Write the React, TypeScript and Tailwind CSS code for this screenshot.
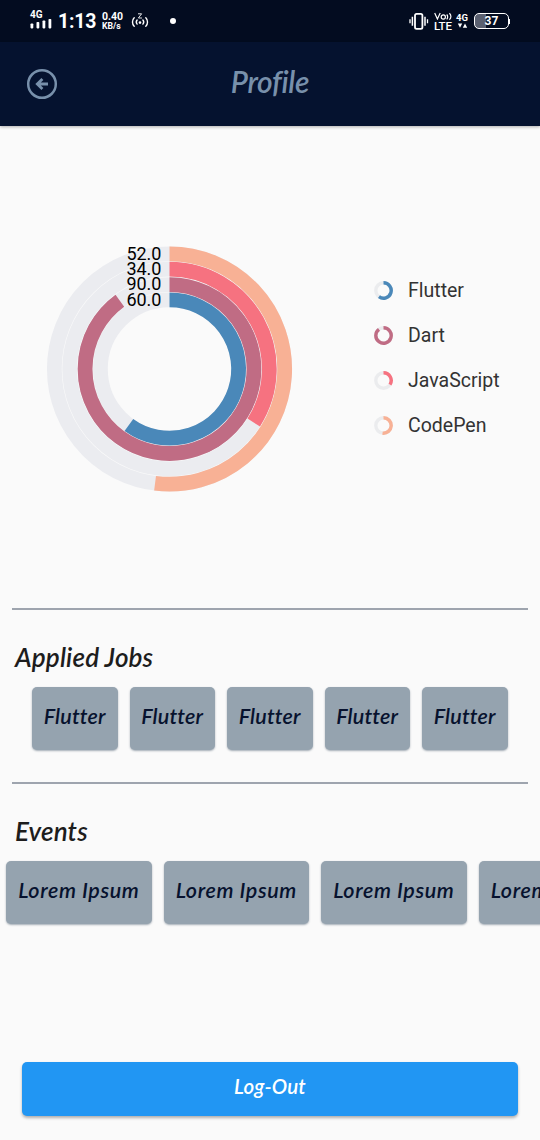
import React from "react";

const LEGEND = [
  { name: "Flutter", value: 60, color: "#4a88b9" },
  { name: "Dart", value: 90, color: "#c06c84" },
  { name: "JavaScript", value: 34, color: "#f67280" },
  { name: "CodePen", value: 52, color: "#f8b195" },
];

function arc(cx: number, cy: number, r: number, percent: number) {
  const a = (percent / 100) * Math.PI * 2;
  const x = cx + r * Math.sin(a);
  const y = cy - r * Math.cos(a);
  return `M${cx} ${cy - r}A${r} ${r} 0 ${percent > 50 ? 1 : 0} 1 ${x} ${y}`;
}

function RadialChart() {
  return (
    <svg width="248" height="248" viewBox="0 0 248 248" fill="none" className="shrink-0">
      {LEGEND.map((s, i) => {
        const r = 69.1 + i * 15.35;
        return (
          <g key={s.name} strokeWidth="14.8">
            <circle cx="124.5" cy="124" r={r} stroke="#ebecf0" />
            <path d={arc(124.5, 124, r, s.value)} stroke={s.color} />
          </g>
        );
      })}
      <g fill="#000" fontFamily="Roboto, sans-serif" fontSize="18" textAnchor="end">
        <text x="116.5" y="14.6">52.0</text>
        <text x="116.5" y="30">34.0</text>
        <text x="116.5" y="45.4">90.0</text>
        <text x="116.5" y="60.8">60.0</text>
      </g>
    </svg>
  );
}

function StatusBar() {
  return (
    <div className="flex h-[42px] items-start justify-between bg-[#030c20] pr-[30px] pl-[30px] font-['Roboto',sans-serif] text-white">
      <div className="flex items-start">
        <div className="flex w-[28px] flex-col pt-[11px]">
          <span className="text-[10px] leading-[8px] font-bold">4G</span>
          <svg width="22" height="10" viewBox="0 0 22 10" fill="#fff">
            <rect x="0.5" y="4.4" width="2.8" height="5" rx="0.8" />
            <rect x="6.5" y="3" width="2.8" height="6.4" rx="0.8" />
            <rect x="12.5" y="1.4" width="2.8" height="8" rx="0.8" />
            <rect x="18.5" y="0" width="2.8" height="9.4" rx="0.8" />
          </svg>
        </div>
        <span className="w-[44px] pt-[10px] text-[19.5px] leading-[24px] font-bold tracking-[-0.2px] whitespace-nowrap">1:13</span>
        <div className="flex w-[29px] flex-col pt-[12px] font-bold whitespace-nowrap">
          <span className="text-[10.5px] leading-[9px]">0.40</span>
          <span className="text-[8.7px] leading-[10px]">KB/s</span>
        </div>
        <svg width="18" height="18" viewBox="0 0 18 18" fill="none" stroke="#fff" strokeWidth="1.4" strokeLinecap="round" className="mt-[12px]">
          <path d="M3.2 5.8C.9 8 .9 12 3.2 14.2M14.8 5.8c2.3 2.2 2.3 6.2 0 8.4M6.1 8c-1 1.2-1 2.9 0 4.1M11.9 8c1 1.2 1 2.9 0 4.1" />
          <path d="M7.4 1.8h3.2L7.4 6h3.2" strokeWidth=".9" />
          <circle cx="9" cy="10.6" r="1.3" fill="#fff" stroke="none" />
        </svg>
        <span className="mt-[18px] ml-[21px] size-[6px] rounded-full bg-white" />
      </div>
      <div className="flex items-start">
        <svg width="20" height="18" viewBox="0 0 20 18" fill="none" stroke="#fff" className="mt-[12px]">
          <rect x="6" y="1.8" width="7.4" height="15" rx="1.6" strokeWidth="1.8" />
          <path d="M3.4 4.7v9M16 4.7v9" strokeWidth="1.5" />
          <path d="M1 7.2v4M18.5 7.2v4" strokeWidth="1.3" />
        </svg>
        <div className="ml-[5px] flex w-[20px] flex-col pt-[12px]">
          <svg width="20" height="8" viewBox="0 0 20 8" fill="none" stroke="#fff" strokeWidth="1.2">
            <path d="M.7 1 3.4 7 6.2 1" />
            <circle cx="9.3" cy="5" r="2.1" />
            <path d="M12.7 2.5c1.3 1.3 1.3 3.6 0 4.9M15.4 1.2c2 1.9 2 4.5 0 6.4" />
          </svg>
          <span className="mt-px text-[11.5px] leading-[10px] font-medium tracking-[-0.2px]">LTE</span>
        </div>
        <div className="ml-[2px] flex w-[18px] flex-col pt-[14px]">
          <span className="text-[9.5px] leading-[8px] font-bold">4G</span>
          <svg width="13" height="6" viewBox="0 0 13 6" fill="#fff" className="mt-px">
            <path d="M1.8.6h4.4L4 4.8ZM6.8 4.8h4.4L9 .6Z" />
          </svg>
        </div>
        <div className="mt-[13px] flex items-center">
          <div className="flex h-[16px] w-[35px] items-center justify-center rounded-[5px] border-[1.5px] border-white bg-[linear-gradient(90deg,#5a6070_0_32%,transparent_32%)] text-[12px] leading-[12px] font-bold">37</div>
          <span className="h-[5px] w-px bg-white" />
        </div>
      </div>
    </div>
  );
}

function SectionTitle({ children }: { children: React.ReactNode }) {
  return <h2 className="mt-[30px] ml-[15px] h-[34px] text-[26px] leading-[34px] tracking-[0.15px] whitespace-nowrap text-[#1d1d1d]">{children}</h2>;
}

function Card({ label, width, tracking }: { label: string; width: string; tracking: string }) {
  return (
    <div className={`${width} ${tracking} flex h-[63px] shrink-0 justify-center rounded-[5px] bg-[#95a3af] pt-[15px] text-[21.5px] leading-[28px] whitespace-nowrap text-[#07122e] shadow-[0_1px_2px_rgba(60,80,100,.45)]`}>
      {label}
    </div>
  );
}

export default function App() {
  return (
    <div className="flex h-[1140px] w-[540px] flex-col overflow-hidden bg-[#fafafa] font-['Lato',sans-serif] font-semibold italic">
      <div className="not-italic">
        <StatusBar />
      </div>
      <header className="grid h-[84px] shrink-0 grid-cols-3 items-center bg-[#05122f] text-[#7890ab] shadow-[0_1px_3px_rgba(0,0,0,.3)]">
        <svg width="32" height="32" viewBox="0 0 32 32" fill="none" stroke="currentColor" className="ml-[26px]">
          <circle cx="16" cy="16" r="13.8" strokeWidth="2.5" />
          <path d="M22 16H12M16.4 10.9 11.3 16l5.1 5.1" strokeWidth="2.8" />
        </svg>
        <h1 className="pb-[7px] text-center text-[30px] leading-[36px] tracking-[-0.3px]">Profile</h1>
      </header>

      <section className="flex h-[482px] shrink-0 items-start pl-[45px] font-['Roboto',sans-serif] font-normal not-italic">
        <div className="mt-[119px]">
          <RadialChart />
        </div>
        <ul className="mt-[142px] ml-[81px]">
          {LEGEND.map((s) => (
            <li key={s.name} className="flex h-[45px] items-center text-[19.5px] text-[#333]">
              <svg width="20" height="20" viewBox="0 0 20 20" fill="none" strokeWidth="3.4" className="mr-[14px] -mt-px">
                <circle cx="9.5" cy="10.5" r="7.7" stroke="#ebecee" />
                <path d={arc(9.5, 10.5, 7.7, s.value)} stroke={s.color} />
              </svg>
              {s.name}
            </li>
          ))}
        </ul>
      </section>

      <section className="h-[174px] shrink-0">
        <hr className="mx-3 border-t-2 border-[#9ea4ae]" />
        <SectionTitle>Applied Jobs</SectionTitle>
        <div className="mt-[13px] flex gap-[12px] pl-[32px]">
          {[0, 1, 2, 3, 4].map((n) => (
            <Card key={n} label="Flutter" width="w-[85.5px]" tracking="tracking-[0.15px]" />
          ))}
        </div>
      </section>

      <section className="shrink-0">
        <hr className="mx-3 border-t-2 border-[#9ea4ae]" />
        <SectionTitle>Events</SectionTitle>
        <div className="mt-[13px] flex gap-[12px] pl-[6px]">
          {[0, 1, 2, 3].map((n) => (
            <Card key={n} label="Lorem Ipsum" width="w-[145.5px]" tracking="tracking-[0.6px]" />
          ))}
        </div>
      </section>

      <button className="mx-[22px] mt-auto mb-[24px] flex h-[54px] shrink-0 justify-center rounded-[5px] bg-[#2196f3] pt-[10px] text-[20.5px] leading-[28px] tracking-[0.15px] text-white shadow-[0_2px_3px_rgba(0,0,0,.3)]">
        Log-Out
      </button>
    </div>
  );
}
